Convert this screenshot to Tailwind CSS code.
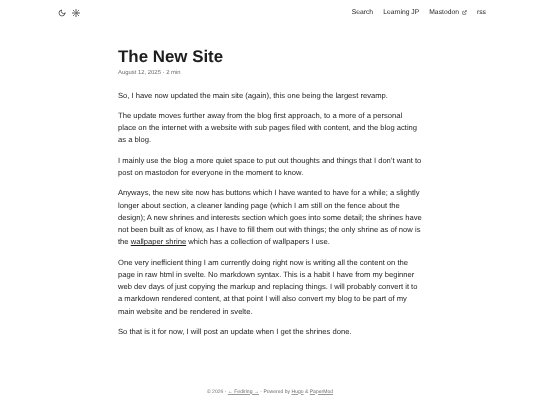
<!DOCTYPE html>
<html lang="en">
<head>
    <meta charset="UTF-8">
    <title>The New Site</title>
    <script src="https://cdn.jsdelivr.net/npm/@tailwindcss/browser@4"></script>
</head>
<body class="bg-white text-[#1e1e1e] font-['Liberation_Sans',sans-serif] [text-rendering:geometricPrecision]">
    <div class="h-[405px] overflow-hidden flex flex-col blur-[0.25px]">
    <nav class="flex items-center justify-between h-[26px] pl-[58px] pr-[54px] text-[6.75px]">
        <div class="flex items-center gap-[5.5px]">
            <svg class="w-[8px] h-[8px]" viewBox="0 0 24 24" fill="none" stroke="currentColor" stroke-width="2" stroke-linecap="round" stroke-linejoin="round"><path d="M21 12.79A9 9 0 1 1 11.21 3 7 7 0 0 0 21 12.79z"/></svg>
            <svg class="w-[8px] h-[8px]" viewBox="0 0 24 24" fill="none" stroke="currentColor" stroke-width="2.2" stroke-linecap="round" stroke-linejoin="round"><circle cx="12" cy="12" r="3.5"/><path d="M12 1v4M12 19v4M4.22 4.22l2.8 2.8M17 17l2.8 2.8M1 12h4M19 12h4M4.22 19.78l2.8-2.8M17 7l2.8-2.8"/></svg>
        </div>
        <div class="flex items-center gap-[10.1px]">
            <a>Search</a>
            <a>Learning JP</a>
            <a class="flex items-center gap-[3px]">Mastodon
                <svg class="w-[5px] h-[5px] mb-[1px]" viewBox="0 0 24 24" fill="none" stroke="currentColor" stroke-width="2.5"><path d="M18 13v6a2 2 0 0 1-2 2H5a2 2 0 0 1-2-2V8a2 2 0 0 1 2-2h6M15 3h6v6M10 14L21 3"/></svg>
            </a>
            <a>rss</a>
        </div>
    </nav>
    <main class="w-[303.75px] ml-[118px] flex-1">
        <h1 class="text-[16.9px] leading-[21px] font-bold mt-[20px]">The New Site</h1>
        <p class="text-[5.9px] leading-[8px] text-[#6c6c6c] mt-[2px]">August 12, 2025 · 2 min</p>
        <div class="text-[7.61px] leading-[12.25px] mt-[12.5px] flex flex-col gap-[8.1px]">
            <p>So, I have now updated the main site (again), this one being the largest revamp.</p>
            <p>The update moves further away from the blog first approach, to a more of a personal place on the internet with a website with sub pages filed with content, and the blog acting as a blog.</p>
            <p>I mainly use the blog a more quiet space to put out thoughts and things that I don’t want to post on mastodon for everyone in the moment to know.</p>
            <p>Anyways, the new site now has buttons which I have wanted to have for a while; a slightly longer about section, a cleaner landing page (which I am still on the fence about the design); A new shrines and interests section which goes into some detail; the shrines have not been built as of know, as I have to fill them out with things; the only shrine as of now is the <a class="underline">wallpaper shrine</a> which has a collection of wallpapers I use.</p>
            <p>One very inefficient thing I am currently doing right now is writing all the content on the page in raw html in svelte. No markdown syntax. This is a habit I have from my beginner web dev days of just copying the markup and replacing things. I will probably convert it to a markdown rendered content, at that point I will also convert my blog to be part of my main website and be rendered in svelte.</p>
            <p>So that is it for now, I will post an update when I get the shrines done.</p>
        </div>
    </main>
    <footer class="h-[16.5px] text-center text-[5.06px] text-[#6c6c6c]">
        © 2026 · <a class="underline decoration-[#9a9a9a]">← Fediring →</a> · Powered by <a class="underline decoration-[#9a9a9a]">Hugo</a> &amp; <a class="underline decoration-[#9a9a9a]">PaperMod</a>
    </footer>
    </div>
</body>
</html>
